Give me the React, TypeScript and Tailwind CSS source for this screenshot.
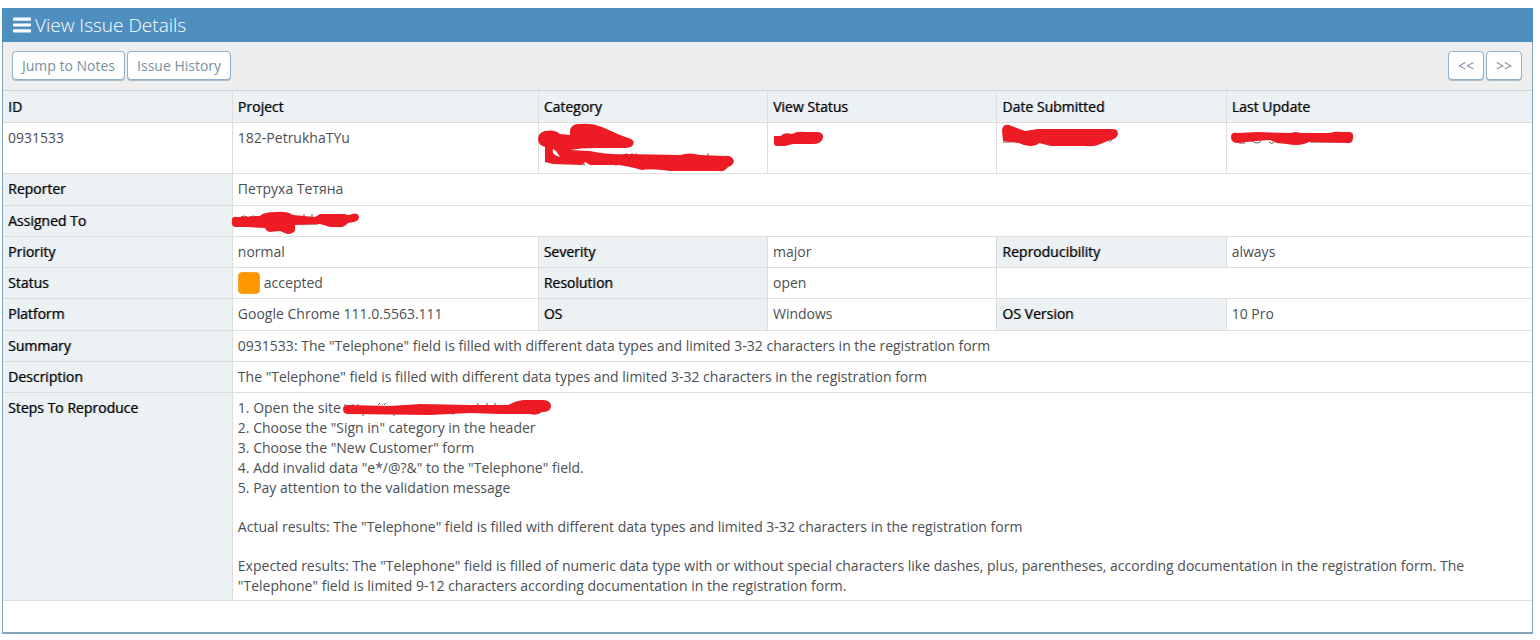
import type { ReactNode } from 'react';

function Label({ children, tall, col }: { children: ReactNode; tall?: boolean; col?: boolean }) {
  return (
    <th
      scope={col ? 'col' : 'row'}
      className={`${tall ? 'h-8' : 'h-[31px]'} ${col ? 'pt-[6px] pb-[5px]' : 'pt-[5px] pb-1'} border border-[#dddddd] bg-[#ecf1f4] px-[5px] text-left align-top font-medium text-black [text-shadow:1px_0_0_rgba(0,0,0,0.4)]`}
    >
      {children}
    </th>
  );
}

function Value({ children, span }: { children?: ReactNode; span?: number }) {
  return (
    <td colSpan={span} className="relative border border-[#dddddd] px-[5px] pt-[5px] pb-1 align-top">
      {children}
    </td>
  );
}

/* Marker strokes that hide a private value; the drawing overlays its cell. */
function Redaction({ box, label, children }: { box: string; label: string; children: ReactNode }) {
  return (
    <svg
      role="img"
      aria-label={label}
      viewBox={box}
      className="absolute top-0 -left-px h-[30px] w-[200px] overflow-visible fill-[#ed1c24]"
    >
      {children}
    </svg>
  );
}

const traces = { fill: 'none', stroke: '#6b5558', strokeWidth: 1 };

function ToolButton({ children }: { children: ReactNode }) {
  return (
    <button
      type="button"
      className="h-[29px] rounded-[4px] border border-[#8fb1cb] bg-white px-[9px] text-sm leading-5 text-[#7b90a1] shadow-[0_1px_0_#a9bdca]"
    >
      {children}
    </button>
  );
}

export default function App() {
  return (
    <main className="bg-white pt-2 pr-[7px] pb-[5px] pl-[2px] font-['Open_Sans','Noto_Sans',sans-serif] text-sm leading-5 text-[#4c4f52]">
      <section className="border border-b-2 border-[#7fa5bf] bg-white pb-8">
        <header className="-mx-px -mt-px flex h-[34px] items-center gap-1 bg-[#4f8fbf] pb-px pl-[11px] text-white">
          <svg viewBox="0 0 18 16" className="h-4 w-[18px] fill-white" aria-hidden="true">
            <rect y="0.5" width="18" height="3.2" rx="1" />
            <rect y="6.4" width="18" height="3.2" rx="1" />
            <rect y="12.3" width="18" height="3.2" rx="1" />
          </svg>
          <h1 className="text-[19px] leading-7 font-light">View Issue Details</h1>
        </header>

        <div className="flex h-[49px] items-center justify-between bg-[#eeeeee] pr-[10px] pb-[2px] pl-[9px]">
          <div className="flex gap-[2px]">
            <ToolButton>Jump to Notes</ToolButton>
            <ToolButton>Issue History</ToolButton>
          </div>
          <div className="flex gap-[2px]">
            <ToolButton>&lt;&lt;</ToolButton>
            <ToolButton>&gt;&gt;</ToolButton>
          </div>
        </div>

        <table className="w-full table-fixed border-collapse border-hidden shadow-[0_-1px_0_#cfd2d4,0_1px_0_#dddddd]">
          <colgroup>
            <col className="w-[15%]" />
            <col className="w-[20%]" />
            <col className="w-[15%]" />
            <col className="w-[15%]" />
            <col className="w-[15%]" />
            <col className="w-[20%]" />
          </colgroup>
          <tbody>
            <tr>
              <Label col>ID</Label>
              <Label col>Project</Label>
              <Label col>Category</Label>
              <Label col>View Status</Label>
              <Label col>Date Submitted</Label>
              <Label col>Last Update</Label>
            </tr>
            <tr className="h-[51px]">
              <Value>0931533</Value>
              <Value>182-PetrukhaTYu</Value>
              <Value>
                <Redaction label="Category hidden" box="538 122 200 30">
                  <path {...traces} d="M626 154v-2M632 154v-2M636 154v-2M708 156v-4M584 162v3M616 162v3" />
                  <path d="M570 131Q570 122 581 123Q592 122 602 126L620 134L631 138Q635 140 633 144Q631 147 625 147L596 147Q580 147 570 149L590 150Q610 154 625 153L680 154Q690 151 700 154L724 155Q732 154 734 160Q733 165 728 166Q725 171 719 170L670 170Q650 167 642 169Q628 165 618 164L590 164L585 161L582 164L553 163L545 161L545 146Q538 144 538 138Q538 132 545 130Q555 128 560 133L570 134Z" />
                  <path d="M553 148Q551 154 560 156L556 150Z" fill="white" />
                </Redaction>
              </Value>
              <Value>
                <Redaction label="View status hidden" box="767 122 200 30">
                  <path d="M774 135L781 135Q784 131 792 133Q797 130 805 131L818 131Q824 132 823 137Q821 143 813 143L793 143L785 145L776 145Q773 144 774 139Z" />
                </Redaction>
              </Value>
              <Value>
                <Redaction label="Submission date hidden" box="996 122 200 30">
                  <path {...traces} d="M1003 141h8M1108 139q3 3 4-1" />
                  <path d="M1002 129Q1003 123 1009 124L1025 130L1038 128L1112 128Q1118 128 1118 133Q1117 138 1110 139L1098 144Q1092 146 1085 145L1051 145L1039 142Q1037 145 1030 145Q1024 145 1019 142L1003 140Z" />
                </Redaction>
              </Value>
              <Value>
                <Redaction label="Last update hidden" box="1226 122 200 30">
                  <path {...traces} d="M1239 142h6M1252 140q5 4 9 0M1269 141q3 3 5 0M1310 141h30" />
                  <path d="M1231 136Q1231 131 1237 132L1258 131L1290 132L1296 131L1301 132L1330 132Q1335 130 1342 131L1349 131Q1354 131 1353 137Q1353 143 1347 142L1309 141L1304 143Q1296 145 1287 143L1277 142L1270 139L1256 140L1238 142Q1231 142 1231 136Z" />
                </Redaction>
              </Value>
            </tr>
            <tr>
              <Label tall>Reporter</Label>
              <Value span={5}>Петруха Тетяна</Value>
            </tr>
            <tr>
              <Label>Assigned To</Label>
              <Value span={5}>
                <Redaction label="Assignee hidden" box="232 205 200 30">
                  <path {...traces} d="M241 216q4-2 6 0M250 216q4-2 7 0M304 216v-3M312 216v-3M298 223h20" />
                  <path d="M232 219Q232 215 238 216L260 215Q263 211 276 211Q287 210 293 214L315 216L320 213L345 213Q348 215 352 213Q358 211 359 216Q359 220 354 221L348 222Q344 227 338 226L330 226L320 223L295 224L295 229Q294 233 287 233L280 230L270 231Q266 230 265 227L245 226L235 226Q231 225 232 219Z" />
                </Redaction>
              </Value>
            </tr>
            <tr>
              <Label>Priority</Label>
              <Value>normal</Value>
              <Label>Severity</Label>
              <Value>major</Value>
              <Label>Reproducibility</Label>
              <Value>always</Value>
            </tr>
            <tr>
              <Label>Status</Label>
              <Value>
                <span className="flex h-5 items-center gap-1">
                  <span className="size-[22px] shrink-0 rounded-[4px] border border-[#f5a32a] bg-[#ff9800]" />
                  accepted
                </span>
              </Value>
              <Label>Resolution</Label>
              <Value>open</Value>
              <Value span={2} />
            </tr>
            <tr>
              <Label tall>Platform</Label>
              <Value>Google Chrome 111.0.5563.111</Value>
              <Label tall>OS</Label>
              <Value>Windows</Value>
              <Label tall>OS Version</Label>
              <Value>10 Pro</Value>
            </tr>
            <tr>
              <Label>Summary</Label>
              <Value span={5}>
                0931533: The "Telephone" field is filled with different data types and limited 3-32 characters in the registration form
              </Value>
            </tr>
            <tr>
              <Label>Description</Label>
              <Value span={5}>
                The "Telephone" field is filled with different data types and limited 3-32 characters in the registration form
              </Value>
            </tr>
            <tr>
              <Label>Steps To Reproduce</Label>
              <Value span={5}>
                <Redaction label="Site address hidden" box="232 392 200 30">
                  <path {...traces} d="M345 403v4M353 403v3M358 403v3M378 404l2-2M384 404l2-2M363 412v3M394 412v3M453 411v3M478 404v-2M487 404v-2M495 404v-2" />
                  <path d="M343 408Q343 404 348 404L390 405L420 403L470 404L508 404Q515 400 523 399L544 399Q551 400 551 405Q551 411 542 411Q537 415 530 413L500 413L470 412L430 414L348 413Q343 413 343 408Z" />
                </Redaction>
                <div className="flex flex-col gap-[19px]">
                  <div>
                    <p>1. Open the site</p>
                    <p>2. Choose the "Sign in" category in the header</p>
                    <p>3. Choose the "New Customer" form</p>
                    <p>4. Add invalid data "e*/@?&amp;" to the "Telephone" field.</p>
                    <p>5. Pay attention to the validation message</p>
                  </div>
                  <p>
                    Actual results: The "Telephone" field is filled with different data types and limited 3-32 characters in the registration form
                  </p>
                  <p>
                    Expected results: The "Telephone" field is filled of numeric data type with or without special characters like dashes, plus, parentheses, according documentation in the registration form. The "Telephone" field is limited 9-12 characters according documentation in the registration form.
                  </p>
                </div>
              </Value>
            </tr>
          </tbody>
        </table>
      </section>
    </main>
  );
}
